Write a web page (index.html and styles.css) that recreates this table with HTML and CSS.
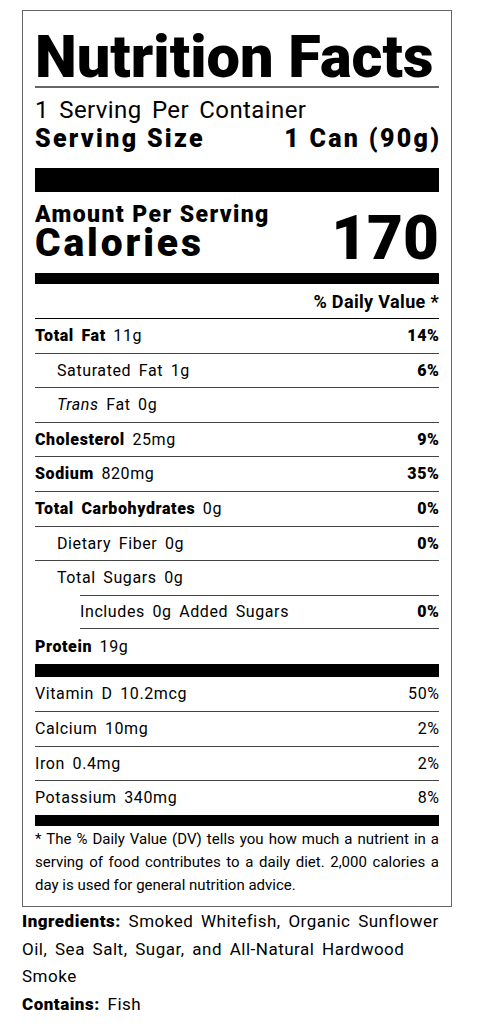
FILE: index.html
```html
<!DOCTYPE html>
<html lang="en">
<head>
<meta charset="utf-8">
<title>Nutrition Facts</title>
<link rel="stylesheet" href="styles.css">
</head>
<body>
<div class="page">
  <section class="label">
    <h1 class="title">Nutrition Facts</h1>
    <div class="servings">1 Serving Per Container</div>
    <div class="serving-size"><span>Serving Size</span><span>1 Can (90g)</span></div>
    <div class="bar bar-xl"></div>
    <div class="calories">
      <div class="cal-left">
        <div class="amount">Amount Per Serving</div>
        <div class="cal-word">Calories</div>
      </div>
      <div class="cal-num">170</div>
    </div>
    <div class="bar bar-md"></div>
    <div class="dv-head">% Daily Value *</div>
    <div class="row"><span><b>Total Fat</b> 11g</span><b>14%</b></div>
    <div class="row in1"><span>Saturated Fat 1g</span><b>6%</b></div>
    <div class="row in1"><span><i>Trans</i> Fat 0g</span></div>
    <div class="row"><span><b>Cholesterol</b> 25mg</span><b>9%</b></div>
    <div class="row"><span><b>Sodium</b> 820mg</span><b>35%</b></div>
    <div class="row"><span><b>Total Carbohydrates</b> 0g</span><b>0%</b></div>
    <div class="row in1"><span>Dietary Fiber 0g</span><b>0%</b></div>
    <div class="row in1 short-rule"><span>Total Sugars 0g</span></div>
    <div class="row in2"><span>Includes 0g Added Sugars</span><b>0%</b></div>
    <div class="row last protein"><span><b>Protein</b> 19g</span></div>
    <div class="bar bar-lg"></div>
    <div class="row"><span>Vitamin D 10.2mcg</span><span>50%</span></div>
    <div class="row"><span>Calcium 10mg</span><span>2%</span></div>
    <div class="row"><span>Iron 0.4mg</span><span>2%</span></div>
    <div class="row last"><span>Potassium 340mg</span><span>8%</span></div>
    <div class="bar bar-md"></div>
    <p class="footnote">* The % Daily Value (DV) tells you how much a nutrient in a serving of food contributes to a daily diet. 2,000 calories a day is used for general nutrition advice.</p>
  </section>
  <p class="ingredients"><b>Ingredients:</b> Smoked Whitefish, Organic Sunflower Oil, Sea Salt, Sugar, and All-Natural Hardwood Smoke</p>
  <p class="contains"><b>Contains:</b> Fish</p>
</div>
</body>
</html>
```
FILE: styles.css
```css
* { box-sizing: border-box; }
html, body { margin: 0; padding: 0; background: #fff; }
body {
  font-family: Roboto, "Noto Sans", "Liberation Sans", sans-serif;
  color: #000;
}
.page {
  width: 430px;
  margin-left: 22px;
  padding-top: 10px;
}
.label {
  border: 1px solid #666;
  padding: 0 12px 9px;
}
.title {
  margin: 0;
  padding-top: 17px;
  font-size: 59.5px;
  line-height: 58px;
  font-weight: 900;
  border-bottom: 2px solid #666;
}
.servings {
  padding-top: 8px;
  font-size: 24px;
  line-height: 28px;
  letter-spacing: 0.4px;
  word-spacing: 4px;
}
.serving-size {
  display: flex;
  justify-content: space-between;
  font-size: 25px;
  line-height: 30px;
  font-weight: 900;
  letter-spacing: 2.3px;
  margin-right: -2.3px;
}
.bar { background: #000; }
.bar-xl { height: 24px; margin-top: 14px; }
.bar-md { height: 11px; }
.bar-lg { height: 13px; }
.calories {
  display: flex;
  justify-content: space-between;
  align-items: flex-end;
  padding-top: 10px;
  margin-bottom: 15px;
}
.amount {
  font-size: 23px;
  line-height: 26px;
  font-weight: 900;
  letter-spacing: 1.4px;
}
.cal-word {
  font-size: 39px;
  line-height: 30px;
  font-weight: 900;
  letter-spacing: 2.9px;
}
.cal-num {
  font-size: 62px;
  line-height: 40px;
  font-weight: 900;
}
.dv-head {
  padding-top: 2px;
  font-size: 18px;
  line-height: 32px;
  font-weight: 700;
  letter-spacing: 0.35px;
  text-align: right;
  border-bottom: 1px solid #000;
}
.row {
  display: flex;
  justify-content: space-between;
  font-size: 16px;
  line-height: 33.6px;
  border-bottom: 1px solid #444;
  letter-spacing: 0.6px;
  word-spacing: 3px;
}
.row b { font-weight: 900; }
.row > :last-child { margin-right: -0.6px; }
.row.in1 { padding-left: 22px; }
.row.short-rule { border-bottom: none; }
.row.in2 { border-top: 1px solid #444; margin-left: 45px; line-height: 32.6px; }
.row.last { border-bottom: none; line-height: 34px; }
.row.protein { line-height: 35px; }
.footnote {
  margin: 0;
  padding-top: 2px;
  font-size: 15px;
  line-height: 23px;
  text-align: justify;
}
.ingredients, .contains {
  margin: 0;
  font-size: 17px;
  line-height: 27.5px;
  letter-spacing: 0.5px;
  word-spacing: 3px;
}
.ingredients { padding-top: 1px; }
.ingredients b, .contains b { font-weight: 900; }
```
